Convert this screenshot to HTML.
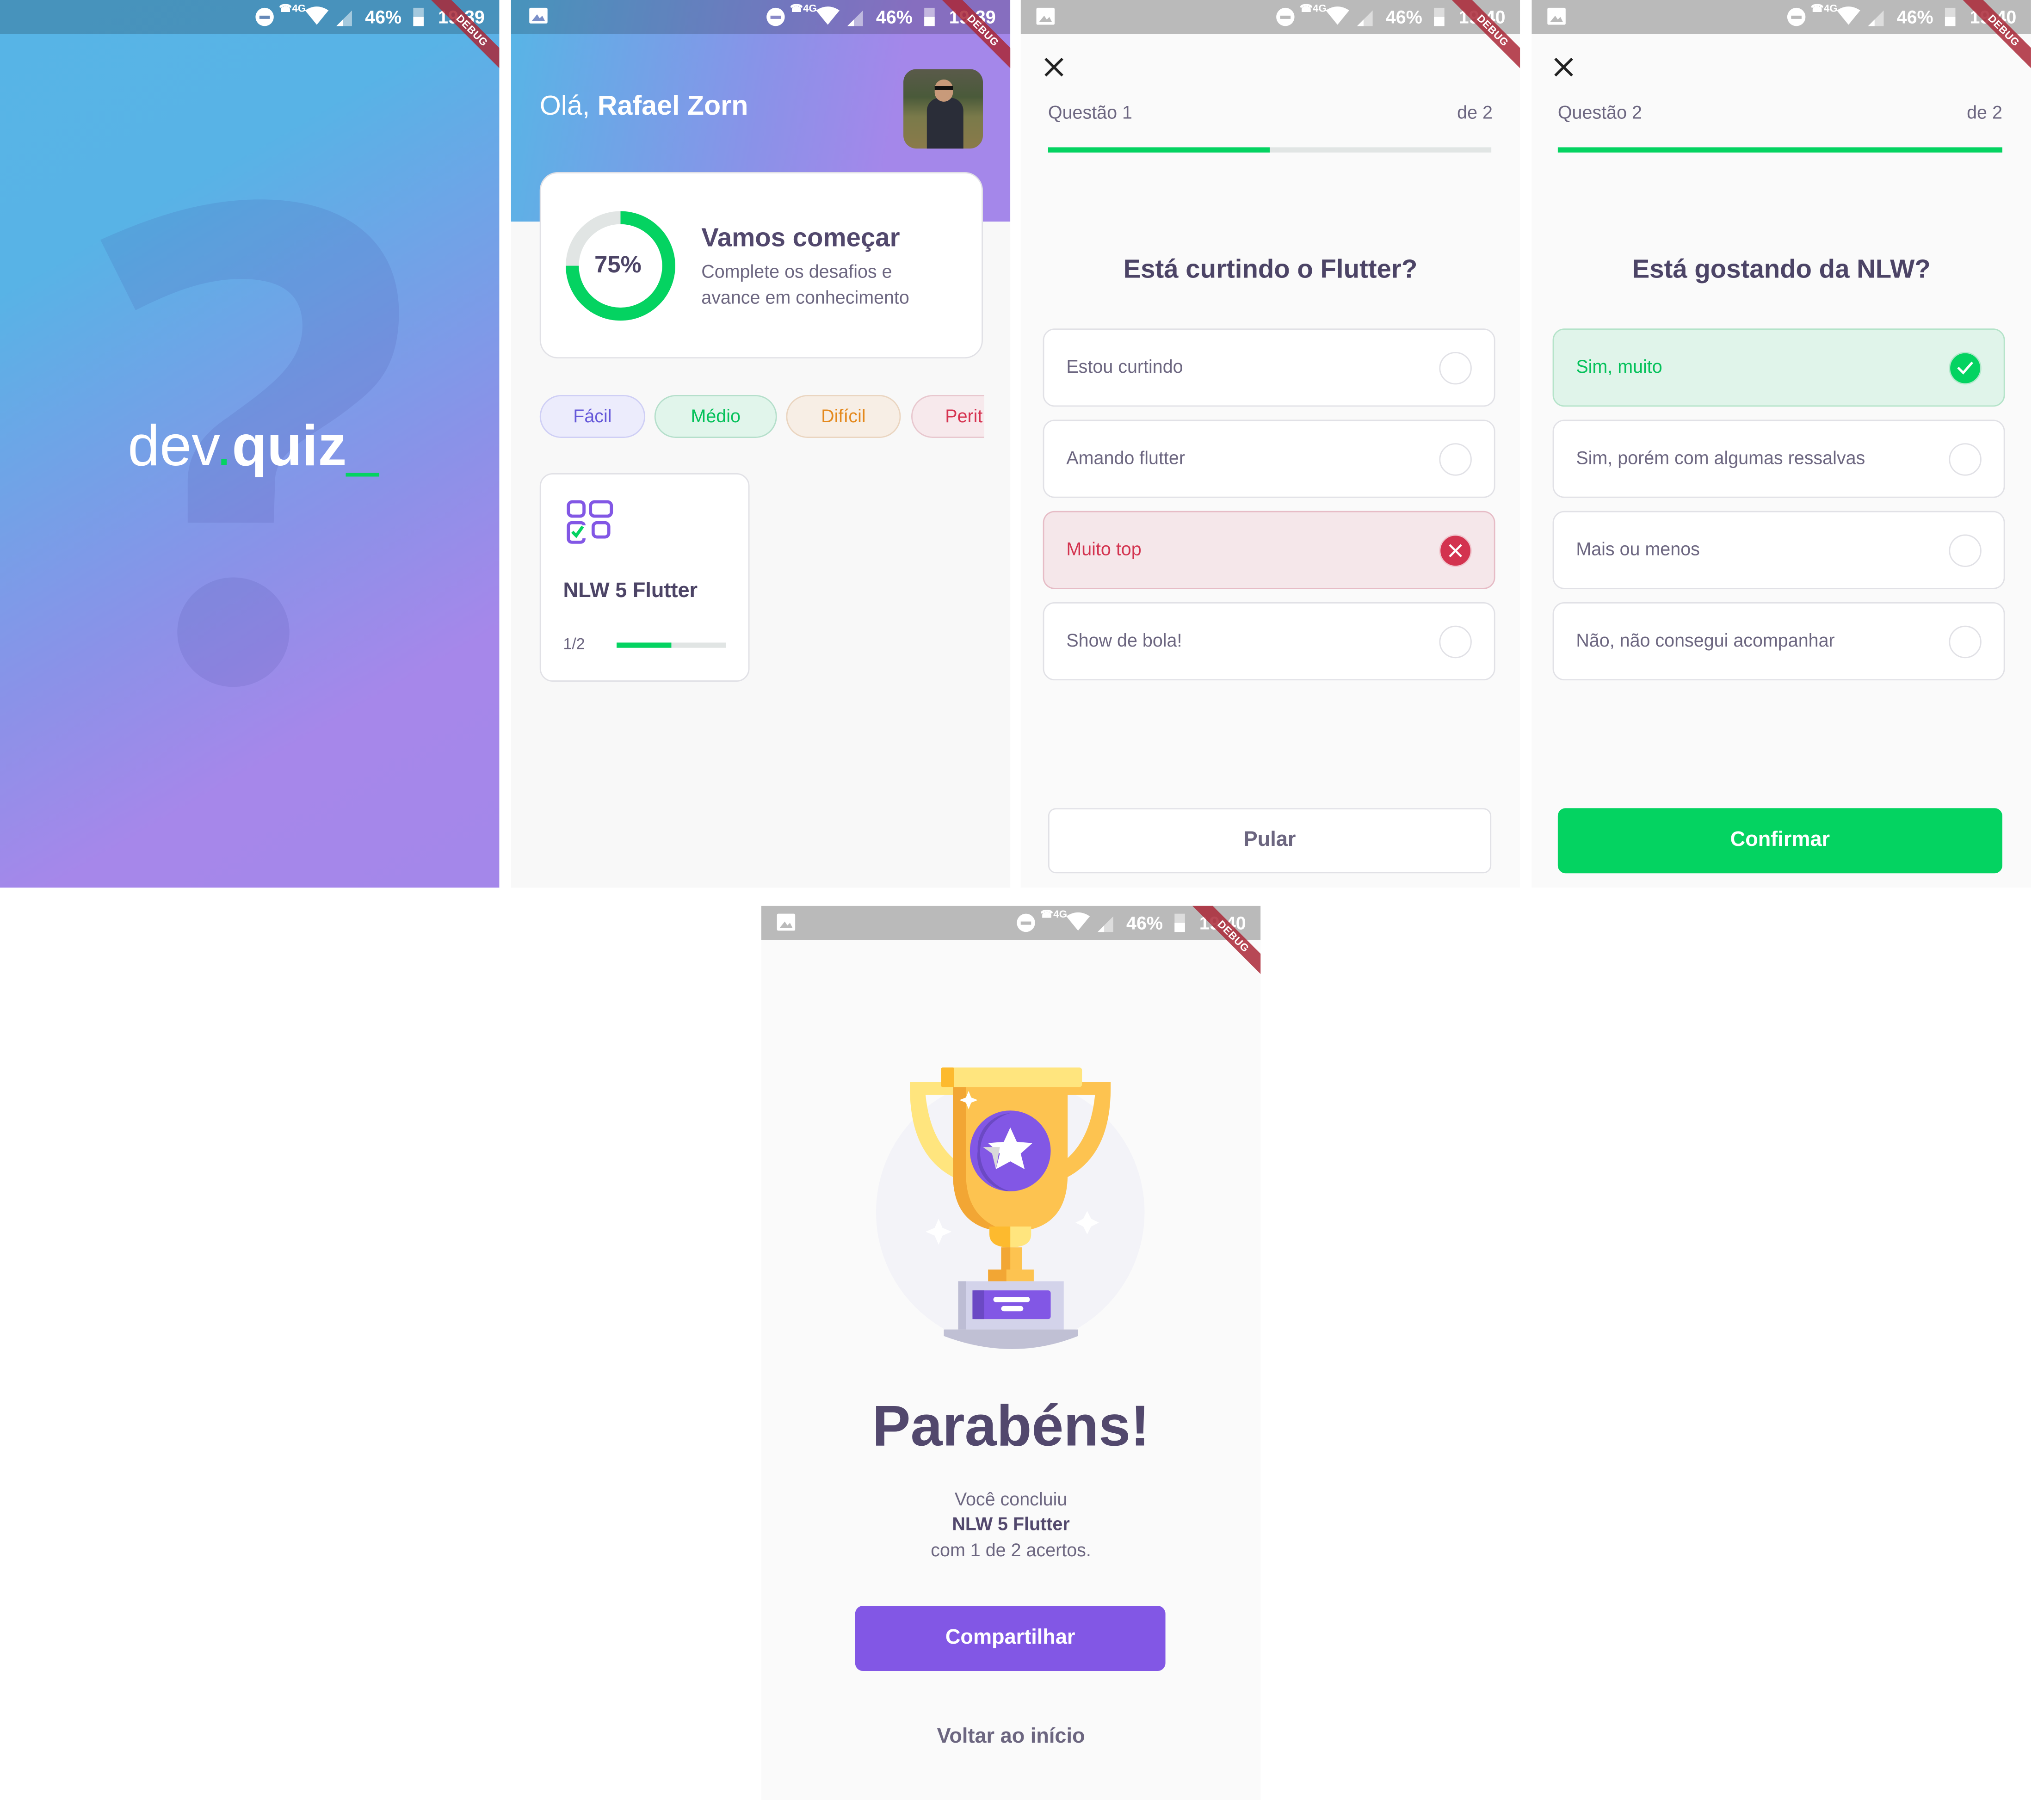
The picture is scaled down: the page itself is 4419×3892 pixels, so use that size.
<!DOCTYPE html>
<html><head><meta charset="utf-8">
<style>
*{box-sizing:border-box;margin:0;padding:0}
html,body{width:4419px;height:3890px;overflow:hidden;background:#fff}
#root{position:absolute;left:0;top:0;width:1569px;height:1381px;transform:scale(2.8183);transform-origin:0 0;font-family:"Liberation Sans",sans-serif}
.scr{position:absolute;width:383px;height:681px;overflow:hidden;background:#fafafa}
.abs{position:absolute}
.sb{position:absolute;left:0;top:0;width:100%;height:26px}
.sbi{position:absolute;top:0;height:26px;color:#fff;font-size:14px;line-height:26px;font-weight:bold}
.ribbon{position:absolute;width:90px;height:11px;background:rgba(170,40,55,.85);color:#fff;font-size:8px;font-weight:bold;text-align:center;line-height:11px;transform:rotate(45deg);right:-24px;top:18px;letter-spacing:.3px}
.opt{position:absolute;left:17px;width:347px;height:60px;border:1.5px solid #e1e1e6;border-radius:9px;background:#fff;font-size:14px;color:#6c6680;line-height:57px;padding-left:17px}
.opt .c{position:absolute;right:17px;top:17px;width:25px;height:25px;border:1.5px solid #e1e1e6;border-radius:50%}
.ttl{position:absolute;left:0;width:100%;text-align:center;font-size:20px;font-weight:bold;color:#4c4466}
.chip{position:absolute;top:303px;height:33px;border-radius:17px;border:1.5px solid;font-size:14px;text-align:center;line-height:30px}
</style></head><body><div id="root">

<!-- Screen 1 -->
<div class="scr" style="left:0;top:0;background:linear-gradient(150deg,#57b4e6 0%,#58b3e6 25%,#8a92e8 60%,#a687ea 78%,#a487ea 100%)">
  <svg class="abs" style="left:0;top:0" width="383" height="681"><g fill="rgba(60,60,150,0.12)">
    <path d="M77 184 C115 167 155 153 200 153 C265 153 306 185 306 240 C306 285 285 300 267 314 C240 335 211 345 211 369 L210 401 L144 401 L144 369 C144 345 160 330 175 320 C205 298 232 280 232 250 C232 225 215 214 185 214 C155 214 128 226 104 238 Z"/>
    <ellipse cx="179" cy="485" rx="43" ry="42"/></g></svg>
  <div class="sb" style="background:rgba(0,0,0,.18)"></div>
  <div class="abs" style="left:98px;top:318px;font-size:44px;color:#fff;line-height:50px;white-space:nowrap">dev<span style="color:#04d361">.</span><b>quiz</b><span style="color:#04d361">_</span></div>
  <div class="sbi" style="left:195px"><svg width="16" height="26"><circle cx="8" cy="13" r="7" fill="#fff"/><rect x="4" y="12" width="8" height="2.5" fill="#6689b8"/></svg></div>
  <div class="sbi" style="left:214px;font-size:8px;line-height:14px">☎4G</div>
  <div class="sbi" style="left:233px"><svg width="20" height="26"><path d="M1 8 Q10 2 19 8 L10 19Z" fill="#fff"/></svg></div>
  <div class="sbi" style="left:257px"><svg width="14" height="26"><path d="M1 20 L13 8 L13 20Z" fill="rgba(255,255,255,.5)"/><path d="M1 20 L6 15 L6 20Z" fill="#fff"/></svg></div>
  <div class="sbi" style="left:280px">46%</div>
  <div class="sbi" style="left:316px"><svg width="10" height="26"><rect x="1" y="6" width="8" height="14" fill="rgba(255,255,255,.5)"/><rect x="1" y="13" width="8" height="7" fill="#fff"/></svg></div>
  <div class="sbi" style="left:336px">19:39</div>
  <div class="ribbon">DEBUG</div>
</div>

<!-- Screen 2 -->
<div class="scr" style="left:392px;top:0;background:#f8f8f8">
  <div class="abs" style="left:0;top:0;width:383px;height:170px;background:linear-gradient(100deg,#57b5e6 0%,#8a92e8 50%,#a487ea 75%)"></div>
  <div class="sb" style="background:rgba(0,0,0,.18)"></div>
  <div class="sbi" style="left:13px"><svg width="16" height="26"><rect x="1" y="6" width="14" height="12" rx="1" fill="#fff"/><path d="M3 16 L7 11 L9 14 L11 12 L13 16Z" fill="#7a8fc8"/></svg></div>
  <div class="sbi" style="left:195px"><svg width="16" height="26"><circle cx="8" cy="13" r="7" fill="#fff"/><rect x="4" y="12" width="8" height="2.5" fill="#8a8ac8"/></svg></div>
  <div class="sbi" style="left:214px;font-size:8px;line-height:14px">☎4G</div>
  <div class="sbi" style="left:233px"><svg width="20" height="26"><path d="M1 8 Q10 2 19 8 L10 19Z" fill="#fff"/></svg></div>
  <div class="sbi" style="left:257px"><svg width="14" height="26"><path d="M1 20 L13 8 L13 20Z" fill="rgba(255,255,255,.5)"/><path d="M1 20 L6 15 L6 20Z" fill="#fff"/></svg></div>
  <div class="sbi" style="left:280px">46%</div>
  <div class="sbi" style="left:316px"><svg width="10" height="26"><rect x="1" y="6" width="8" height="14" fill="rgba(255,255,255,.5)"/><rect x="1" y="13" width="8" height="7" fill="#fff"/></svg></div>
  <div class="sbi" style="left:336px">19:39</div>
  <div class="ribbon">DEBUG</div>
  <div class="abs" style="left:22px;top:70px;font-size:21px;color:#fff;white-space:nowrap">Olá, <b>Rafael Zorn</b></div>
  <div class="abs" style="left:301px;top:53px;width:61px;height:61px;border-radius:10px;overflow:hidden;background:linear-gradient(180deg,#5a5a4a 0%,#4a5a3a 35%,#7a7a4a 60%,#8a7a4a 100%)">
    <div class="abs" style="left:18px;top:22px;width:28px;height:40px;border-radius:10px 10px 0 0;background:#2a2d38"></div>
    <div class="abs" style="left:24px;top:8px;width:14px;height:17px;border-radius:7px;background:#c89a7a"></div>
    <div class="abs" style="left:24px;top:13px;width:14px;height:3px;background:#111"></div>
  </div>
  <div class="abs" style="left:22px;top:132px;width:340px;height:143px;background:#fff;border:1.5px solid #e1e1e6;border-radius:14px"></div>
  <svg class="abs" style="left:42px;top:160px" width="88" height="88"><circle cx="42" cy="44" r="37" fill="none" stroke="#e1e5e4" stroke-width="10"/><circle cx="42" cy="44" r="37" fill="none" stroke="#04d361" stroke-width="10" stroke-dasharray="174.4 232.5" transform="rotate(-90 42 44)"/></svg>
  <div class="abs" style="left:64px;top:193px;font-size:18px;font-weight:bold;color:#4c4466">75%</div>
  <div class="abs" style="left:146px;top:172px;font-size:20px;font-weight:bold;color:#52486d;white-space:nowrap">Vamos começar</div>
  <div class="abs" style="left:146px;top:199px;font-size:14px;color:#6c6680;line-height:19.5px;white-space:nowrap">Complete os desafios e<br>avance em conhecimento</div>
  <div class="chip" style="left:22px;width:81px;background:#ececfc;border-color:#cfcff5;color:#6558d9">Fácil</div>
  <div class="chip" style="left:110px;width:94px;background:#e1f5eb;border-color:#b5dfcb;color:#04c15a">Médio</div>
  <div class="chip" style="left:211px;width:88px;background:#f7eee5;border-color:#ead5c0;color:#e4891e">Difícil</div>
  <div class="chip" style="left:307px;width:56px;background:#f7e9ec;border-color:#e8c7ce;color:#d63250;text-align:left;padding-left:25px;border-right:none;border-radius:17px 0 0 17px;overflow:hidden;white-space:nowrap">Perit</div>
  <div class="abs" style="left:22px;top:363px;width:161px;height:160px;background:#fff;border:1.5px solid #e1e1e6;border-radius:10px"></div>
  <svg class="abs" style="left:42px;top:383px" width="38" height="36" fill="none" stroke="#8257e5" stroke-width="2.4"><rect x="2" y="2" width="12" height="11" rx="3"/><rect x="19" y="2" width="16" height="11" rx="3"/><path d="M14 20 Q14 18 11 18 H5 Q2 18 2 21 V30 Q2 33 5 33 H11 Q14 33 14 30"/><rect x="21" y="18" width="12" height="11" rx="3"/><path d="M5 25 L8 28 L13 21" stroke="#04d361"/></svg>
  <div class="abs" style="left:40px;top:445px;font-size:16px;font-weight:bold;color:#4c4466;white-space:nowrap">NLW 5 Flutter</div>
  <div class="abs" style="left:40px;top:487px;font-size:12px;color:#6c6680">1/2</div>
  <div class="abs" style="left:81px;top:493px;width:84px;height:3.5px;background:#e1e5e4"></div>
  <div class="abs" style="left:81px;top:493px;width:42px;height:3.5px;background:#04d361"></div>
</div>

<!-- Screen 3 -->
<div class="scr" style="left:783px;top:0">
  <div class="sb" style="background:#bababa"></div>
  <div class="sbi" style="left:11px"><svg width="16" height="26"><rect x="1" y="6" width="14" height="13" rx="1" fill="#fff"/><path d="M3 17 L7 12 L9 15 L11 13 L13 17Z" fill="#bababa"/></svg></div>
  <div class="sbi" style="left:195px"><svg width="16" height="26"><circle cx="8" cy="13" r="7" fill="#fff"/><rect x="4" y="12" width="8" height="2.5" fill="#bababa"/></svg></div>
  <div class="sbi" style="left:214px;font-size:8px;line-height:14px">☎4G</div>
  <div class="sbi" style="left:233px"><svg width="20" height="26"><path d="M1 8 Q10 2 19 8 L10 19Z" fill="#fff"/></svg></div>
  <div class="sbi" style="left:257px"><svg width="14" height="26"><path d="M1 20 L13 8 L13 20Z" fill="rgba(255,255,255,.5)"/><path d="M1 20 L6 15 L6 20Z" fill="#fff"/></svg></div>
  <div class="sbi" style="left:280px">46%</div>
  <div class="sbi" style="left:316px"><svg width="10" height="26"><rect x="1" y="6" width="8" height="14" fill="rgba(255,255,255,.5)"/><rect x="1" y="13" width="8" height="7" fill="#fff"/></svg></div>
  <div class="sbi" style="left:336px">19:40</div>
  <div class="ribbon">DEBUG</div>
  <svg class="abs" style="left:18px;top:44px" width="15" height="15" stroke="#222" stroke-width="2"><path d="M1 1 L14 14 M14 1 L1 14"/></svg>
  <div class="abs" style="left:21px;top:78px;font-size:14px;color:#6c6680">Questão 1</div>
  <div class="abs" style="right:21px;top:78px;font-size:14px;color:#6c6680">de 2</div>
  <div class="abs" style="left:21px;top:113px;width:340px;height:4px;background:#e1e5e4"></div>
  <div class="abs" style="left:21px;top:113px;width:170px;height:4px;background:#04d361"></div>
  <div class="ttl" style="top:196px">Está curtindo o Flutter?</div>
  <div class="opt" style="top:252px">Estou curtindo<div class="c"></div></div>
  <div class="opt" style="top:322px">Amando flutter<div class="c"></div></div>
  <div class="opt" style="top:392px;background:#f5e7ea;border-color:#e6bcc6;color:#d3334f">Muito top<div class="c" style="background:#d3334f;border-color:#f0c7cf"><svg class="abs" style="left:6px;top:6px" width="11" height="11" stroke="#fff" stroke-width="1.6"><path d="M1 1 L10 10 M10 1 L1 10"/></svg></div></div>
  <div class="opt" style="top:462px">Show de bola!<div class="c"></div></div>
  <div class="abs" style="left:21px;top:620px;width:340px;height:50px;border:1.5px solid #e1e1e6;border-radius:6px;background:#fff;text-align:center;line-height:47px;font-size:16px;font-weight:bold;color:#6c6680">Pular</div>
</div>

<!-- Screen 4 -->
<div class="scr" style="left:1175px;top:0">
  <div class="sb" style="background:#bababa"></div>
  <div class="sbi" style="left:11px"><svg width="16" height="26"><rect x="1" y="6" width="14" height="13" rx="1" fill="#fff"/><path d="M3 17 L7 12 L9 15 L11 13 L13 17Z" fill="#bababa"/></svg></div>
  <div class="sbi" style="left:195px"><svg width="16" height="26"><circle cx="8" cy="13" r="7" fill="#fff"/><rect x="4" y="12" width="8" height="2.5" fill="#bababa"/></svg></div>
  <div class="sbi" style="left:214px;font-size:8px;line-height:14px">☎4G</div>
  <div class="sbi" style="left:233px"><svg width="20" height="26"><path d="M1 8 Q10 2 19 8 L10 19Z" fill="#fff"/></svg></div>
  <div class="sbi" style="left:257px"><svg width="14" height="26"><path d="M1 20 L13 8 L13 20Z" fill="rgba(255,255,255,.5)"/><path d="M1 20 L6 15 L6 20Z" fill="#fff"/></svg></div>
  <div class="sbi" style="left:280px">46%</div>
  <div class="sbi" style="left:316px"><svg width="10" height="26"><rect x="1" y="6" width="8" height="14" fill="rgba(255,255,255,.5)"/><rect x="1" y="13" width="8" height="7" fill="#fff"/></svg></div>
  <div class="sbi" style="left:336px">19:40</div>
  <div class="ribbon">DEBUG</div>
  <svg class="abs" style="left:17px;top:44px" width="15" height="15" stroke="#222" stroke-width="2"><path d="M1 1 L14 14 M14 1 L1 14"/></svg>
  <div class="abs" style="left:20px;top:78px;font-size:14px;color:#6c6680">Questão 2</div>
  <div class="abs" style="right:22px;top:78px;font-size:14px;color:#6c6680">de 2</div>
  <div class="abs" style="left:20px;top:113px;width:341px;height:4px;background:#04d361"></div>
  <div class="ttl" style="top:196px">Está gostando da NLW?</div>
  <div class="opt" style="left:16px;top:252px;background:#e0f4ea;border-color:#b4e3c9;color:#04c15a">Sim, muito<div class="c" style="background:#04d361;border-color:#b4e9cc"><svg class="abs" style="left:5px;top:6px" width="13" height="11" fill="none" stroke="#fff" stroke-width="1.8"><path d="M1 5 L5 9 L12 1"/></svg></div></div>
  <div class="opt" style="left:16px;top:322px">Sim, porém com algumas ressalvas<div class="c"></div></div>
  <div class="opt" style="left:16px;top:392px">Mais ou menos<div class="c"></div></div>
  <div class="opt" style="left:16px;top:462px">Não, não consegui acompanhar<div class="c"></div></div>
  <div class="abs" style="left:20px;top:620px;width:341px;height:50px;border-radius:6px;background:#04d361;text-align:center;line-height:50px;font-size:16px;font-weight:bold;color:#fff">Confirmar</div>
</div>

<!-- Screen 5 -->
<div class="scr" style="left:584px;top:695px;height:686px">
  <div class="sb" style="background:#bababa"></div>
  <div class="sbi" style="left:11px"><svg width="16" height="26"><rect x="1" y="6" width="14" height="13" rx="1" fill="#fff"/><path d="M3 17 L7 12 L9 15 L11 13 L13 17Z" fill="#bababa"/></svg></div>
  <div class="sbi" style="left:195px"><svg width="16" height="26"><circle cx="8" cy="13" r="7" fill="#fff"/><rect x="4" y="12" width="8" height="2.5" fill="#bababa"/></svg></div>
  <div class="sbi" style="left:214px;font-size:8px;line-height:14px">☎4G</div>
  <div class="sbi" style="left:233px"><svg width="20" height="26"><path d="M1 8 Q10 2 19 8 L10 19Z" fill="#fff"/></svg></div>
  <div class="sbi" style="left:257px"><svg width="14" height="26"><path d="M1 20 L13 8 L13 20Z" fill="rgba(255,255,255,.5)"/><path d="M1 20 L6 15 L6 20Z" fill="#fff"/></svg></div>
  <div class="sbi" style="left:280px">46%</div>
  <div class="sbi" style="left:316px"><svg width="10" height="26"><rect x="1" y="6" width="8" height="14" fill="rgba(255,255,255,.5)"/><rect x="1" y="13" width="8" height="7" fill="#fff"/></svg></div>
  <div class="sbi" style="left:336px">19:40</div>
  <div class="ribbon">DEBUG</div>
  <svg class="abs" style="left:0;top:0" width="383" height="400">
    <circle cx="191" cy="235" r="103" fill="#f3f3f8"/>
    <path d="M114 135 h40 v10 h-28 q4 40 30 55 v12 q-42 -15 -42 -72Z" fill="#ffe57e"/>
    <path d="M268 135 h-40 v10 h28 q-4 40 -30 55 v12 q42 -15 42 -72Z" fill="#fdc350"/>
    <path d="M147 138 h88 v68 q0 44 -44 44 q-44 0 -44 -44Z" fill="#fdc350"/>
    <path d="M147 138 h10 v68 q0 36 34 44 q-44 0 -44 -44Z" fill="#f2a634"/>
    <rect x="138" y="124" width="108" height="15" rx="2" fill="#ffe57e"/>
    <rect x="138" y="124" width="10" height="15" rx="1" fill="#fdba2e"/>
    <circle cx="191" cy="188" r="31" fill="#8257e5"/>
    <path d="M166 188 a27 27 0 0 1 25 -29 a31 31 0 0 0 0 60 a27 27 0 0 1 -25 -31Z" fill="#6b49c4"/>
    <path d="M191 170 l5 11 12 1 -9 8 3 12 -11 -6 -11 6 3 -12 -9 -8 12 -1Z" fill="#fff"/>
    <path d="M183 185 l-3 17 -3 -12 -7 -5Z" fill="#d9d9d9"/>
    <path d="M175 246 h32 v6 q0 10 -16 10 q-16 0 -16 -10Z" fill="#ffe57e"/>
    <path d="M175 246 h16 v16 q-16 0 -16 -10Z" fill="#fdba2e"/>
    <rect x="184" y="262" width="16" height="17" fill="#fdc350"/>
    <rect x="184" y="262" width="7" height="17" fill="#f2a634"/>
    <rect x="174" y="279" width="35" height="9" fill="#fdc350"/>
    <rect x="174" y="279" width="14" height="9" fill="#f2a634"/>
    <rect x="151" y="288" width="81" height="37" fill="#d3d3ea"/>
    <rect x="151" y="288" width="6" height="37" fill="#bdbdd4"/>
    <rect x="162" y="295" width="60" height="22" rx="2" fill="#8257e5"/>
    <rect x="162" y="295" width="9" height="22" fill="#6b49c4"/>
    <rect x="178" y="300" width="28" height="4" rx="2" fill="#fff"/>
    <rect x="184" y="307" width="17" height="4" rx="2" fill="#fff"/>
    <path d="M140 325 h103 v5 q-50 20 -103 0Z" fill="#c0c0d4"/>
    <path d="M159 142 l2 5 5 2 -5 2 -2 5 -2 -5 -5 -2 5 -2Z" fill="#fff"/>
    <path d="M136 240 l3 7 7 3 -7 3 -3 7 -3 -7 -7 -3 7 -3Z" fill="#fff"/>
    <path d="M250 234 l3 6 6 3 -6 3 -3 6 -3 -6 -6 -3 6 -3Z" fill="#fff"/>
  </svg>
  <div class="ttl" style="top:375px;font-size:44px;color:#52486d">Parabéns!</div>
  <div class="abs" style="left:0;width:383px;top:446px;text-align:center;font-size:14px;color:#6c6680;line-height:19.3px">Você concluiu<br><b style="color:#52486d">NLW 5 Flutter</b><br>com 1 de 2 acertos.</div>
  <div class="abs" style="left:72px;top:537px;width:238px;height:50px;border-radius:6px;background:#8257e5;color:#fff;text-align:center;line-height:50px;font-size:16px;font-weight:bold">Compartilhar</div>
  <div class="abs" style="left:0;width:383px;top:629px;text-align:center;font-size:16px;font-weight:bold;color:#6c6680">Voltar ao início</div>
</div>

</div></body></html>
